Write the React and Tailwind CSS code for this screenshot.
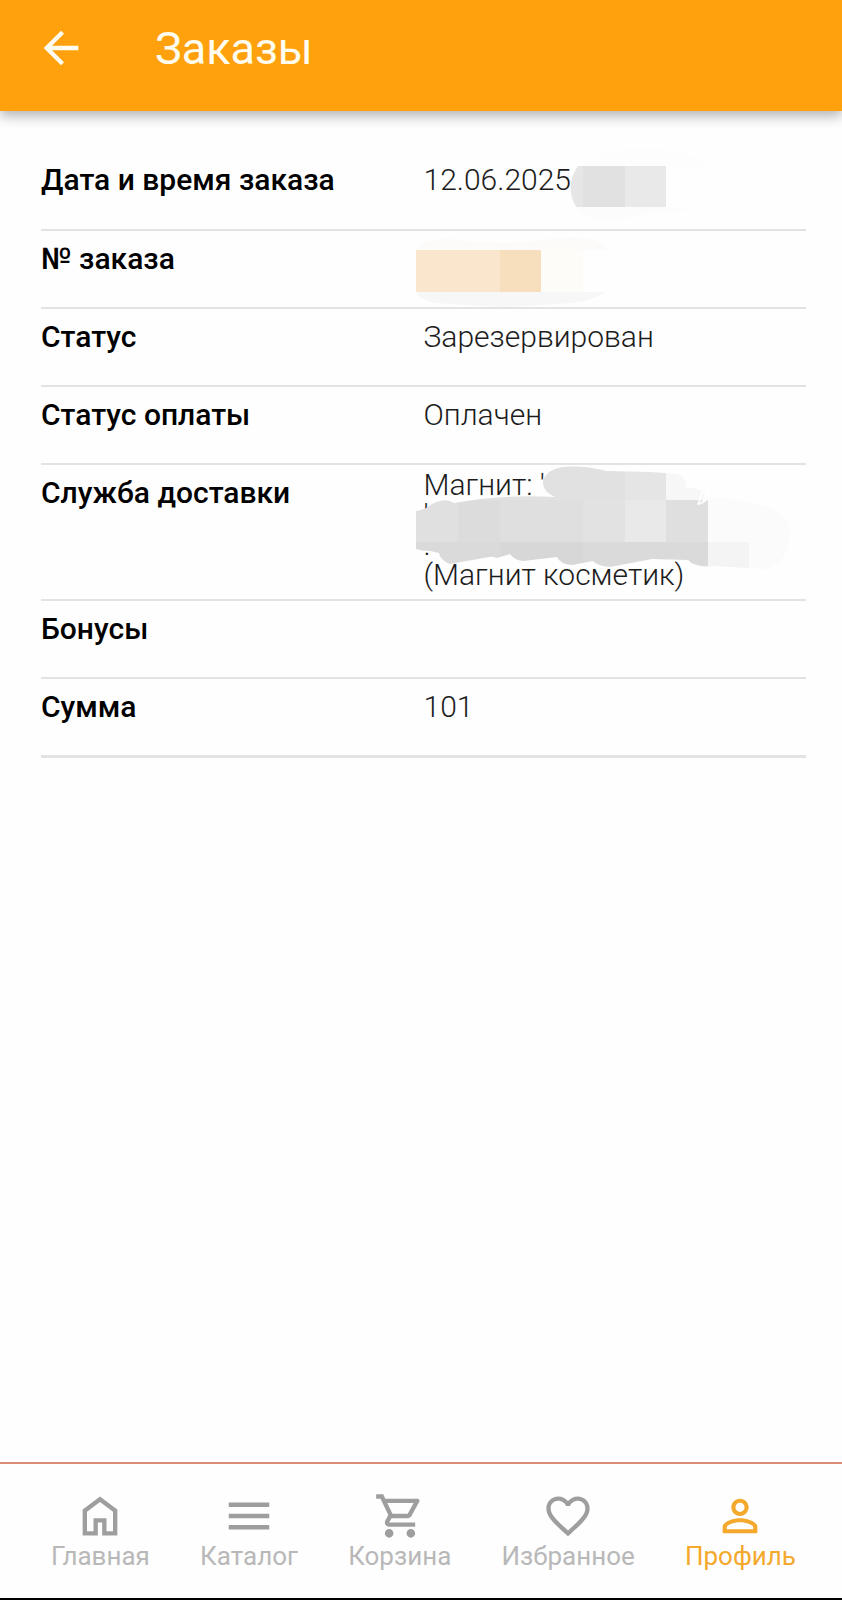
import React from 'react';
import { MdOutlineShoppingCart, MdFavoriteBorder, MdPersonOutline, MdMenu, MdArrowBack } from 'react-icons/md';

const HomeIcon = () => (
  <svg viewBox="0 -960 960 960" fill="currentColor" className="size-[52px]" aria-hidden="true">
    <path d="M240-200h120v-240h240v240h120v-360L480-740 240-560v360Zm-80 80v-480l320-240 320 240v480H520v-240h-80v240H160Z" />
  </svg>
);

// hidden time of the order
const TimeMask = () => (
  <svg width="160" height="72" viewBox="560 148 160 72" className="absolute left-[136px] -top-[5px]" aria-hidden="true">
    <path d="M585 167Q600 152 640 149Q690 148 704 167Z" fill="#fdfdfd" />
    <path d="M576 208H694Q680 213 650 214Q610 224 590 219Z" fill="#fcfcfc" />
    <path d="M578 167H583V208H576Q564 187 578 167Z" fill="#e6e6e6" />
    <path d="M583 167h42v41h-42z" fill="#e1e1e1" />
    <path d="M625 167h41v41h-41z" fill="#e9e9e9" />
  </svg>
);

// hidden order number
const NumberMask = () => (
  <svg width="200" height="72" viewBox="410 236 200 72" className="absolute -left-[14px] top-[5px]" aria-hidden="true">
    <path d="M416 250Q422 238 450 239Q500 246 541 240Q600 232 606 250Z" fill="#fcfbf9" />
    <path d="M416 292H605Q590 303 555 304Q510 308 480 306L435 303Q420 300 416 292Z" fill="#f7f7f7" />
    <path d="M541 250h42v42h-42z" fill="#fefcf9" />
    <path d="M416 250h84v42h-84z" fill="#fae6cd" />
    <path d="M500 250h41v42h-41z" fill="#f7dfbe" />
  </svg>
);

// hidden delivery address
const AddressMask = () => (
  <svg width="390" height="113" viewBox="410 465 390 113" className="absolute -left-[14px] top-0" aria-hidden="true">
    <clipPath id="stroke">
      <path d="M555 497Q542 491 543 481Q546 470 562 467Q585 465 606 471L650 472L677 474Q687 477 686 488Q704 487 707 498Q735 497 755 504Q788 509 790 532Q790 562 766 569L715 566Q695 568 688 560L652 559L610 567Q597 566 593 561L572 565Q560 564 557 557L523 561Q514 560 510 554L497 558Q492 556 489 557L450 564Q440 560 439 553L430 551Q422 551 416 549V511Q425 510 432 504Q446 497 454 503L480 499Q515 495 555 497Z" />
    </clipPath>
    <g clipPath="url(#stroke)">
      <path d="M410 464h215v36h-215z" fill="#e1e1e1" />
      <path d="M625 464h41v36h-41z" fill="#e5e5e5" />
      <path d="M666 464h42v36h-42z" fill="#f7f7f7" />
      <path d="M410 500h48v42h-48z" fill="#e0e0e0" />
      <path d="M458 500h42v42h-42z" fill="#dcdcdc" />
      <path d="M500 500h83v42h-83z" fill="#dfdfdf" />
      <path d="M583 500h42v42h-42z" fill="#e2e2e2" />
      <path d="M625 500h41v42h-41z" fill="#e9e9e9" />
      <path d="M666 500h42v42h-42z" fill="#dfdfdf" />
      <path d="M708 464h92v114h-92z" fill="#fbfbfb" />
      <path d="M410 542h90v36h-90z" fill="#dadada" />
      <path d="M500 542h83v36h-83z" fill="#d7d7d7" />
      <path d="M583 542h125v36h-125z" fill="#dadada" />
      <path d="M708 542h41v36h-41z" fill="#f4f4f4" />
    </g>
    <path d="M698 505l6-17M703 502l5-12M700 504l8-5" stroke="#fefefe" strokeWidth="2" fill="none" />
  </svg>
);

const rows = [
  { label: 'Дата и время заказа', value: '12.06.2025', mask: <TimeMask /> },
  { label: '№ заказа', value: '', mask: <NumberMask /> },
  { label: 'Статус', value: 'Зарезервирован' },
  { label: 'Статус оплаты', value: 'Оплачен' },
  { label: 'Служба доставки', value: "Магнит: '\n'\n.\n(Магнит косметик)", tall: true, mask: <AddressMask /> },
  { label: 'Бонусы', value: '' },
  { label: 'Сумма', value: '101' },
];

const tabs = [
  { label: 'Главная', icon: <HomeIcon /> },
  { label: 'Каталог', icon: <MdMenu className="size-[54px]" /> },
  { label: 'Корзина', icon: <MdOutlineShoppingCart className="size-[52px]" /> },
  { label: 'Избранное', icon: <MdFavoriteBorder className="size-[52px]" /> },
  { label: 'Профиль', icon: <MdPersonOutline className="size-[52px]" />, active: true },
];

const App = () => {
  return (
    <div className="flex min-h-screen flex-col bg-[#fefefe] font-[Roboto,sans-serif]">
      <header className="flex h-[111px] items-center gap-[68px] bg-[#ffa10d] pb-[15px] pl-[35px] text-[#fffdf0] shadow-[0_5px_12px_rgba(0,0,0,0.3)]">
        <button type="button" aria-label="Назад" className="cursor-pointer">
          <MdArrowBack className="size-[52px]" />
        </button>
        <h1 className="pt-px text-[45px] leading-[54px]">Заказы</h1>
      </header>

      <main className="flex-1 pt-[41px] pr-9 pl-[41px]">
        <table className="w-full table-fixed border-b-[3px] border-[#e3e3e3] text-[30px] leading-[30px]">
          <tbody>
            {rows.map((row) => (
              <tr key={row.label} className="h-[78px] border-b-2 border-[#e3e3e3] align-top">
                <th scope="row" className="pt-[13px] text-left font-medium text-black">{row.label}</th>
                <td className="text-[#1c1c1c]">
                  <div className={row.tall ? 'relative pt-[5px] pb-[9px] font-light whitespace-pre-line' : 'relative pt-[13px] font-light'}>
                    {row.value}
                    {row.mask}
                  </div>
                </td>
              </tr>
            ))}
          </tbody>
        </table>
      </main>

      <nav className="flex h-[138px] items-start justify-between border-t-2 border-b-2 border-t-[#d98b78] border-b-black pt-[27px] pr-[46px] pl-[51px]">
        {tabs.map((tab) => (
          <a
            key={tab.label}
            href="#"
            className={tab.active ? 'flex flex-col items-center text-[#f4a82c]' : 'flex flex-col items-center text-[#9e9e9e]'}
          >
            <span className="flex h-[50px] items-center">{tab.icon}</span>
            <span className={tab.active ? 'text-[26px] leading-[30px]' : 'text-[26px] leading-[30px] text-[#b8b8b8]'}>
              {tab.label}
            </span>
          </a>
        ))}
      </nav>
    </div>
  );
};

export default App;
